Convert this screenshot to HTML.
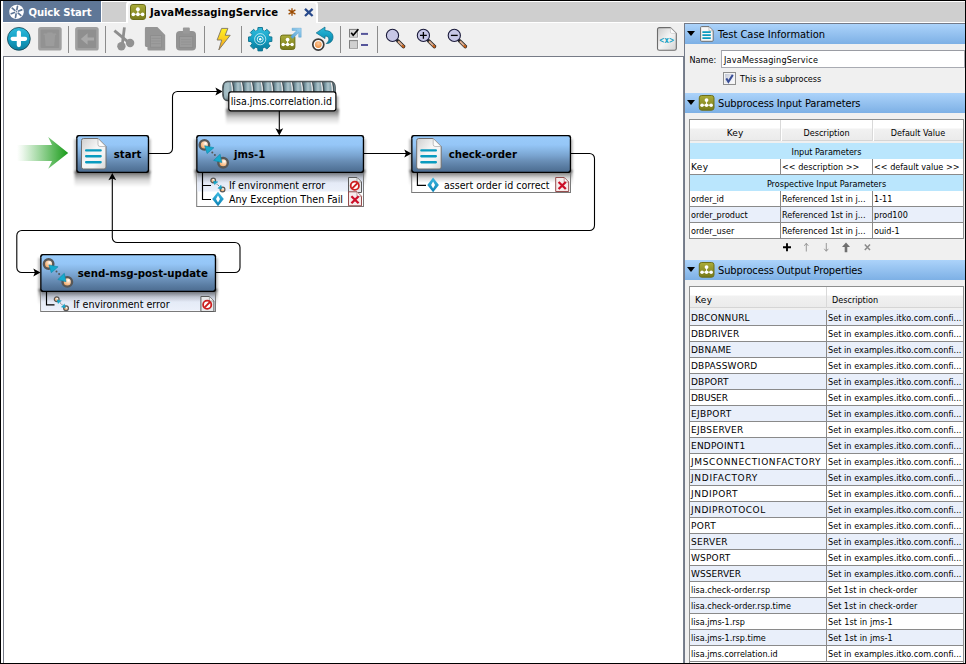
<!DOCTYPE html>
<html>
<head>
<meta charset="utf-8">
<title>JavaMessagingService</title>
<style>
html,body{margin:0;padding:0;}
body{width:966px;height:664px;overflow:hidden;background:#f0f0f0;position:relative;
  font-family:"DejaVu Sans Condensed","DejaVu Sans","Liberation Sans",sans-serif;font-stretch:condensed;font-size:9px;color:#000;}
.abs{position:absolute;}
#frame-top{left:0;top:0;width:966px;height:1px;background:#000;}
#frame-left{left:0;top:0;width:1px;height:664px;background:#000;}
#wl{left:1px;top:1px;width:2px;height:662px;background:#fff;}
#frame-right{left:965px;top:0;width:1px;height:664px;background:#000;}
#frame-bottom{left:0;top:663px;width:966px;height:1px;background:#000;}
#tabbar{left:3px;top:1px;width:962px;height:22px;background:#cfcfcf;border-top:1px solid #fff;border-bottom:1px solid #fff;box-sizing:border-box;}
#tab1{left:3px;top:1px;width:98px;height:21px;background:#5f7797;border-right:1px solid #fff;}
#tab2{left:126px;top:1px;width:192px;height:22px;background:#f0f0f0;border-radius:4px 4px 0 0;border:2px solid #fff;border-bottom:none;box-sizing:border-box;}
.tabtxt{font-weight:bold;font-size:11.2px;white-space:nowrap;}
#toolbar{left:3px;top:23px;width:681px;height:33px;background:#f0f0f0;}
.sep{width:1.2px;height:27px;top:26px;background:#8c8c8c;}
#canvas{left:3px;top:56px;width:681px;height:608px;background:#fff;border-top:1px solid #767b87;border-left:1px solid #767b87;border-right:1px solid #7a8290;box-sizing:border-box;}
#split{left:684px;top:23px;width:281px;height:641px;background:#737a88;}
#rpanel{left:685px;top:24px;width:280px;height:639px;background:#f0f0f0;}
.hdr{left:685px;width:280px;height:20px;background:linear-gradient(#acd3fa,#7db0e5);}
.hdr span{position:absolute;left:33px;top:4px;font-size:11px;white-space:nowrap;}
.t9{font-size:9px;white-space:nowrap;line-height:11px;}
.c{text-align:center;}
.u9{font-family:"DejaVu Sans","Liberation Sans",sans-serif;font-stretch:normal;letter-spacing:0.1px;}
.tri{position:absolute;left:2.1px;top:6.9px;width:0;height:0;border-left:4.45px solid transparent;border-right:4.45px solid transparent;border-top:5.7px solid #000;}
</style>
</head>
<body>
<div id="wl" class="abs"></div>
<div id="tabbar" class="abs"></div>
<div id="tab1" class="abs"><span class="abs tabtxt" style="left:25.5px;top:4.5px;letter-spacing:-0.1px;color:#fff;">Quick Start</span></div>
<div id="tab2" class="abs"><span class="abs tabtxt" style="left:22px;top:2.5px;letter-spacing:0.09px;">JavaMessagingService</span></div>
<div id="toolbar" class="abs"></div>
<div class="abs sep" style="left:68px"></div>
<div class="abs sep" style="left:105px"></div>
<div class="abs sep" style="left:204px"></div>
<div class="abs sep" style="left:241px"></div>
<div class="abs sep" style="left:340px"></div>
<div class="abs sep" style="left:377px"></div>
<div id="canvas" class="abs"></div>
<div id="split" class="abs"></div>
<div id="rpanel" class="abs"></div>
<div class="abs hdr" style="top:24px"><div class="tri"></div><span>Test Case Information</span></div>
<div class="abs hdr" style="top:93px"><div class="tri"></div><span style="letter-spacing:-0.11px">Subprocess Input Parameters</span></div>
<div class="abs hdr" style="top:260px"><div class="tri"></div><span style="letter-spacing:-0.11px">Subprocess Output Properties</span></div>
<!--RIGHT-->
<div class="abs t9" style="left:689.5px;top:55px;">Name:</div>
<div class="abs" style="left:721px;top:50px;width:244px;height:18px;box-sizing:border-box;background:#fff;border:1px solid #a9abb2;border-top-color:#9a9ca3;"></div>
<div class="abs t9" style="left:724px;top:55px;letter-spacing:0.2px;">JavaMessagingService</div>
<div class="abs" style="left:723px;top:72px;width:13px;height:13px;box-sizing:border-box;border:1px solid #8e8f8f;box-shadow:inset 0 0 0 1px #f4f4f4;background:linear-gradient(135deg,#c4c9d6 10%,#eceef4 60%,#fbfbfd 90%);"></div>
<svg class="abs" style="left:723px;top:72px" width="13" height="13" viewBox="0 0 13 13"><path d="M3.3 6.4 L5.4 9.8 L9.8 2.9" fill="none" stroke="#384d96" stroke-width="2"/></svg>
<div class="abs t9" style="left:740px;top:74px;">This is a subprocess</div>
<div class="abs" style="left:689px;top:119px;width:275px;height:120px;box-sizing:border-box;border:1px solid #8e8f8f;background:#fff;"></div>
<div class="abs" style="left:690px;top:120px;width:273px;height:21px;background:linear-gradient(#fff 0%,#fff 40%,#f1f1f1 45%,#ebebeb 100%);border-bottom:1px solid #d5d5d5;box-sizing:border-box;"></div>
<div class="abs" style="left:690px;top:141px;width:273px;height:2px;background:#f0f0f0;"></div>
<div class="abs" style="left:780px;top:120px;width:1px;height:21px;background:#d9d9d9;"></div>
<div class="abs" style="left:781px;top:120px;width:1px;height:21px;background:#fff;"></div>
<div class="abs" style="left:872px;top:120px;width:1px;height:21px;background:#d9d9d9;"></div>
<div class="abs" style="left:873px;top:120px;width:1px;height:21px;background:#fff;"></div>
<div class="abs t9 c u9" style="left:690px;top:128px;width:90px;">Key</div>
<div class="abs t9 c" style="left:781px;top:128px;width:91px;">Description</div>
<div class="abs t9 c" style="left:873px;top:128px;width:90px;">Default Value</div>
<div class="abs t9 c" style="left:690px;top:143px;width:273px;height:16px;background:#bae6fd;line-height:18px;">Input Parameters</div>
<div class="abs t9 c" style="left:690px;top:175px;width:273px;height:16px;background:#bae6fd;line-height:18px;">Prospective Input Parameters</div>
<div class="abs" style="left:690px;top:159px;width:273px;height:15px;background:#fff;"></div>
<div class="abs" style="left:690px;top:174px;width:273px;height:1px;background:#8a8a8a;"></div>
<div class="abs t9 u9" style="left:691px;top:162px;letter-spacing:0.35px;">Key</div>
<div class="abs t9" style="left:782px;top:162px;">&lt;&lt; description &gt;&gt;</div>
<div class="abs t9" style="left:874px;top:162px;">&lt;&lt; default value &gt;&gt;</div>
<div class="abs" style="left:690px;top:191px;width:273px;height:15px;background:#fff;"></div>
<div class="abs" style="left:690px;top:206px;width:273px;height:1px;background:#8a8a8a;"></div>
<div class="abs t9" style="left:691px;top:194px;">order_id</div>
<div class="abs t9" style="left:782px;top:194px;">Referenced 1st in j...</div>
<div class="abs t9" style="left:874px;top:194px;">1-11</div>
<div class="abs" style="left:690px;top:207px;width:273px;height:15px;background:#e9effa;"></div>
<div class="abs" style="left:690px;top:222px;width:273px;height:1px;background:#8a8a8a;"></div>
<div class="abs t9" style="left:691px;top:210px;">order_product</div>
<div class="abs t9" style="left:782px;top:210px;">Referenced 1st in j...</div>
<div class="abs t9" style="left:874px;top:210px;">prod100</div>
<div class="abs" style="left:690px;top:223px;width:273px;height:15px;background:#fff;"></div>
<div class="abs" style="left:690px;top:238px;width:273px;height:1px;background:#8a8a8a;"></div>
<div class="abs t9" style="left:691px;top:226px;">order_user</div>
<div class="abs t9" style="left:782px;top:226px;">Referenced 1st in j...</div>
<div class="abs t9" style="left:874px;top:226px;">ouid-1</div>
<div class="abs" style="left:780px;top:159px;width:1px;height:16px;background:#8a8a8a;"></div>
<div class="abs" style="left:780px;top:191px;width:1px;height:48px;background:#8a8a8a;"></div>
<div class="abs" style="left:872px;top:159px;width:1px;height:16px;background:#8a8a8a;"></div>
<div class="abs" style="left:872px;top:191px;width:1px;height:48px;background:#8a8a8a;"></div>
<svg class="abs" style="left:685px;top:24px" width="280" height="260" viewBox="685 24 280 260">
<defs><linearGradient id="ol2" x1="0" y1="0" x2="0" y2="1"><stop offset="0" stop-color="#aaac3a"/><stop offset="1" stop-color="#787a1a"/></linearGradient>
<g id="sub2"><rect x="0.5" y="0.5" width="15" height="15" rx="2.4" fill="url(#ol2)" stroke="#6b6d17" stroke-width="1"/><path d="M3.2 10.3 H12.6 M7.9 5.2 V10.3" stroke="#fff" stroke-width="0.9"/><circle cx="7.9" cy="5.2" r="1.95" fill="#fff"/><circle cx="3.3" cy="10.4" r="1.8" fill="#fff"/><circle cx="7.9" cy="10.4" r="1.8" fill="#fff"/><circle cx="12.6" cy="10.4" r="1.8" fill="#fff"/></g></defs>
<path d="M701.6 26.6 H709 L713.2 30.8 V40.3 a1 1 0 0 1 -1 1 H701.6 a1 1 0 0 1 -1 -1 V27.6 a1 1 0 0 1 1 -1 Z" fill="#f7f7f7" stroke="#6f6f6f" stroke-width="1"/>
<path d="M709 26.8 V30.8 H713 Z" fill="#fff" stroke="#8a8a8a" stroke-width="0.5"/>
<path d="M702.4 32.1 H710.8 M702.4 35.1 H710.8 M702.4 38.1 H710.8" stroke="#0a9bbf" stroke-width="1.8"/>
<use href="#sub2" transform="translate(698.8,95) scale(0.98)"/>
<use href="#sub2" transform="translate(698.8,262) scale(0.98)"/>
<path d="M787 243.3 V251.3 M783 247.3 H791" stroke="#000" stroke-width="1.9"/>
<path d="M806.3 251.5 V243.5 M804.3 245.8 L806.3 243.3 L808.3 245.8" stroke="#8e8e8e" stroke-width="0.9" fill="none"/>
<path d="M826.3 243 V251 M824.3 248.8 L826.3 251.3 L828.3 248.8" stroke="#8e8e8e" stroke-width="0.9" fill="none"/>
<path d="M846 242.4 L850 247 H847.3 V252.2 H844.7 V247 H842 Z" fill="#6f6f6f"/>
<path d="M864.8 244.6 L870 250 M870 244.6 L864.8 250" stroke="#8a8a8a" stroke-width="1.5"/>
</svg>
<div class="abs" style="left:689px;top:286px;width:275px;height:378px;box-sizing:border-box;border:1px solid #8e8f8f;background:#fff;"></div>
<div class="abs" style="left:690px;top:287px;width:273px;height:21px;background:linear-gradient(#fff 0%,#fff 40%,#f1f1f1 45%,#ebebeb 100%);border-bottom:1px solid #d5d5d5;box-sizing:border-box;"></div>
<div class="abs" style="left:690px;top:308px;width:273px;height:2px;background:#f0f0f0;"></div>
<div class="abs" style="left:826px;top:287px;width:1px;height:21px;background:#d9d9d9;"></div>
<div class="abs t9 u9" style="left:695px;top:295px;letter-spacing:0.35px;">Key</div>
<div class="abs t9" style="left:832px;top:295px;">Description</div>
<div class="abs" style="left:690px;top:310px;width:273px;height:15px;background:#e9effa;"></div>
<div class="abs" style="left:690px;top:325px;width:273px;height:1px;background:#8a8a8a;"></div>
<div class="abs t9 u9" style="left:691px;top:313px;letter-spacing:0.11px;">DBCONNURL</div>
<div class="abs t9" style="left:828px;top:313px;"><span style="letter-spacing:0.05px">Set in examples.itko.com.confi...</span></div>
<div class="abs" style="left:690px;top:326px;width:273px;height:15px;background:#fff;"></div>
<div class="abs" style="left:690px;top:341px;width:273px;height:1px;background:#8a8a8a;"></div>
<div class="abs t9 u9" style="left:691px;top:329px;letter-spacing:0.16px;">DBDRIVER</div>
<div class="abs t9" style="left:828px;top:329px;"><span style="letter-spacing:0.05px">Set in examples.itko.com.confi...</span></div>
<div class="abs" style="left:690px;top:342px;width:273px;height:15px;background:#e9effa;"></div>
<div class="abs" style="left:690px;top:357px;width:273px;height:1px;background:#8a8a8a;"></div>
<div class="abs t9 u9" style="left:691px;top:345px;letter-spacing:0.17px;">DBNAME</div>
<div class="abs t9" style="left:828px;top:345px;"><span style="letter-spacing:0.05px">Set in examples.itko.com.confi...</span></div>
<div class="abs" style="left:690px;top:358px;width:273px;height:15px;background:#fff;"></div>
<div class="abs" style="left:690px;top:373px;width:273px;height:1px;background:#8a8a8a;"></div>
<div class="abs t9 u9" style="left:691px;top:361px;letter-spacing:0.17px;">DBPASSWORD</div>
<div class="abs t9" style="left:828px;top:361px;"><span style="letter-spacing:0.05px">Set in examples.itko.com.confi...</span></div>
<div class="abs" style="left:690px;top:374px;width:273px;height:15px;background:#e9effa;"></div>
<div class="abs" style="left:690px;top:389px;width:273px;height:1px;background:#8a8a8a;"></div>
<div class="abs t9 u9" style="left:691px;top:377px;letter-spacing:0.18px;">DBPORT</div>
<div class="abs t9" style="left:828px;top:377px;"><span style="letter-spacing:0.05px">Set in examples.itko.com.confi...</span></div>
<div class="abs" style="left:690px;top:390px;width:273px;height:15px;background:#fff;"></div>
<div class="abs" style="left:690px;top:405px;width:273px;height:1px;background:#8a8a8a;"></div>
<div class="abs t9 u9" style="left:691px;top:393px;letter-spacing:-0.08px;">DBUSER</div>
<div class="abs t9" style="left:828px;top:393px;"><span style="letter-spacing:0.05px">Set in examples.itko.com.confi...</span></div>
<div class="abs" style="left:690px;top:406px;width:273px;height:15px;background:#e9effa;"></div>
<div class="abs" style="left:690px;top:421px;width:273px;height:1px;background:#8a8a8a;"></div>
<div class="abs t9 u9" style="left:691px;top:409px;letter-spacing:0.34px;">EJBPORT</div>
<div class="abs t9" style="left:828px;top:409px;"><span style="letter-spacing:0.05px">Set in examples.itko.com.confi...</span></div>
<div class="abs" style="left:690px;top:422px;width:273px;height:15px;background:#fff;"></div>
<div class="abs" style="left:690px;top:437px;width:273px;height:1px;background:#8a8a8a;"></div>
<div class="abs t9 u9" style="left:691px;top:425px;letter-spacing:0.33px;">EJBSERVER</div>
<div class="abs t9" style="left:828px;top:425px;"><span style="letter-spacing:0.05px">Set in examples.itko.com.confi...</span></div>
<div class="abs" style="left:690px;top:438px;width:273px;height:15px;background:#e9effa;"></div>
<div class="abs" style="left:690px;top:453px;width:273px;height:1px;background:#8a8a8a;"></div>
<div class="abs t9 u9" style="left:691px;top:441px;letter-spacing:0.21px;">ENDPOINT1</div>
<div class="abs t9" style="left:828px;top:441px;"><span style="letter-spacing:0.05px">Set in examples.itko.com.confi...</span></div>
<div class="abs" style="left:690px;top:454px;width:273px;height:15px;background:#fff;"></div>
<div class="abs" style="left:690px;top:469px;width:273px;height:1px;background:#8a8a8a;"></div>
<div class="abs t9 u9" style="left:691px;top:457px;letter-spacing:0.64px;">JMSCONNECTIONFACTORY</div>
<div class="abs t9" style="left:828px;top:457px;"><span style="letter-spacing:0.05px">Set in examples.itko.com.confi...</span></div>
<div class="abs" style="left:690px;top:470px;width:273px;height:15px;background:#e9effa;"></div>
<div class="abs" style="left:690px;top:485px;width:273px;height:1px;background:#8a8a8a;"></div>
<div class="abs t9 u9" style="left:691px;top:473px;letter-spacing:0.69px;">JNDIFACTORY</div>
<div class="abs t9" style="left:828px;top:473px;"><span style="letter-spacing:0.05px">Set in examples.itko.com.confi...</span></div>
<div class="abs" style="left:690px;top:486px;width:273px;height:15px;background:#fff;"></div>
<div class="abs" style="left:690px;top:501px;width:273px;height:1px;background:#8a8a8a;"></div>
<div class="abs t9 u9" style="left:691px;top:489px;letter-spacing:0.56px;">JNDIPORT</div>
<div class="abs t9" style="left:828px;top:489px;"><span style="letter-spacing:0.05px">Set in examples.itko.com.confi...</span></div>
<div class="abs" style="left:690px;top:502px;width:273px;height:15px;background:#e9effa;"></div>
<div class="abs" style="left:690px;top:517px;width:273px;height:1px;background:#8a8a8a;"></div>
<div class="abs t9 u9" style="left:691px;top:505px;letter-spacing:0.5px;">JNDIPROTOCOL</div>
<div class="abs t9" style="left:828px;top:505px;"><span style="letter-spacing:0.05px">Set in examples.itko.com.confi...</span></div>
<div class="abs" style="left:690px;top:518px;width:273px;height:15px;background:#fff;"></div>
<div class="abs" style="left:690px;top:533px;width:273px;height:1px;background:#8a8a8a;"></div>
<div class="abs t9 u9" style="left:691px;top:521px;letter-spacing:0.35px;">PORT</div>
<div class="abs t9" style="left:828px;top:521px;"><span style="letter-spacing:0.05px">Set in examples.itko.com.confi...</span></div>
<div class="abs" style="left:690px;top:534px;width:273px;height:15px;background:#e9effa;"></div>
<div class="abs" style="left:690px;top:549px;width:273px;height:1px;background:#8a8a8a;"></div>
<div class="abs t9 u9" style="left:691px;top:537px;letter-spacing:0.27px;">SERVER</div>
<div class="abs t9" style="left:828px;top:537px;"><span style="letter-spacing:0.05px">Set in examples.itko.com.confi...</span></div>
<div class="abs" style="left:690px;top:550px;width:273px;height:15px;background:#fff;"></div>
<div class="abs" style="left:690px;top:565px;width:273px;height:1px;background:#8a8a8a;"></div>
<div class="abs t9 u9" style="left:691px;top:553px;letter-spacing:0.19px;">WSPORT</div>
<div class="abs t9" style="left:828px;top:553px;"><span style="letter-spacing:0.05px">Set in examples.itko.com.confi...</span></div>
<div class="abs" style="left:690px;top:566px;width:273px;height:15px;background:#e9effa;"></div>
<div class="abs" style="left:690px;top:581px;width:273px;height:1px;background:#8a8a8a;"></div>
<div class="abs t9 u9" style="left:691px;top:569px;letter-spacing:0.03px;">WSSERVER</div>
<div class="abs t9" style="left:828px;top:569px;"><span style="letter-spacing:0.05px">Set in examples.itko.com.confi...</span></div>
<div class="abs" style="left:690px;top:582px;width:273px;height:15px;background:#fff;"></div>
<div class="abs" style="left:690px;top:597px;width:273px;height:1px;background:#8a8a8a;"></div>
<div class="abs t9" style="left:691px;top:585px;">lisa.check-order.rsp</div>
<div class="abs t9" style="left:828px;top:585px;">Set 1st in check-order</div>
<div class="abs" style="left:690px;top:598px;width:273px;height:15px;background:#e9effa;"></div>
<div class="abs" style="left:690px;top:613px;width:273px;height:1px;background:#8a8a8a;"></div>
<div class="abs t9" style="left:691px;top:601px;">lisa.check-order.rsp.time</div>
<div class="abs t9" style="left:828px;top:601px;">Set 1st in check-order</div>
<div class="abs" style="left:690px;top:614px;width:273px;height:15px;background:#fff;"></div>
<div class="abs" style="left:690px;top:629px;width:273px;height:1px;background:#8a8a8a;"></div>
<div class="abs t9" style="left:691px;top:617px;">lisa.jms-1.rsp</div>
<div class="abs t9" style="left:828px;top:617px;"><span style="letter-spacing:0.09px">Set 1st in jms-1</span></div>
<div class="abs" style="left:690px;top:630px;width:273px;height:15px;background:#e9effa;"></div>
<div class="abs" style="left:690px;top:645px;width:273px;height:1px;background:#8a8a8a;"></div>
<div class="abs t9" style="left:691px;top:633px;">lisa.jms-1.rsp.time</div>
<div class="abs t9" style="left:828px;top:633px;"><span style="letter-spacing:0.09px">Set 1st in jms-1</span></div>
<div class="abs" style="left:690px;top:646px;width:273px;height:15px;background:#fff;"></div>
<div class="abs" style="left:690px;top:661px;width:273px;height:1px;background:#8a8a8a;"></div>
<div class="abs t9" style="left:691px;top:649px;">lisa.jms.correlation.id</div>
<div class="abs t9" style="left:828px;top:649px;"><span style="letter-spacing:0.05px">Set in examples.itko.com.confi...</span></div>
<div class="abs" style="left:826px;top:310px;width:1px;height:352px;background:#8a8a8a;"></div>
<!--/RIGHT-->
<!--DIAGRAM-->
<svg class="abs" style="left:0;top:0" width="966" height="664" viewBox="0 0 966 664">
<defs>
<linearGradient id="ng" x1="0" y1="0" x2="0" y2="1"><stop offset="0" stop-color="#99cbfa"/><stop offset="0.24" stop-color="#95c6f7"/><stop offset="0.4" stop-color="#87b5e3"/><stop offset="0.55" stop-color="#79a3cf"/><stop offset="0.7" stop-color="#698eb6"/><stop offset="0.85" stop-color="#5a7da3"/><stop offset="1" stop-color="#4d6d91"/></linearGradient>
<linearGradient id="sg" x1="0" y1="0" x2="0" y2="1"><stop offset="0" stop-color="#8c94a4"/><stop offset="0.12" stop-color="#a9b1c1"/><stop offset="0.3" stop-color="#d9e1f0"/><stop offset="0.55" stop-color="#eef2fa"/><stop offset="1" stop-color="#ffffff"/></linearGradient>
<linearGradient id="sg2" x1="0" y1="0" x2="0" y2="1"><stop offset="0" stop-color="#8c94a4"/><stop offset="0.07" stop-color="#a9b1c1"/><stop offset="0.18" stop-color="#d9e1f0"/><stop offset="0.45" stop-color="#e8edf8"/><stop offset="0.5" stop-color="#ffffff"/><stop offset="1" stop-color="#ffffff"/></linearGradient>
<linearGradient id="rowb" x1="0" y1="0" x2="0" y2="1"><stop offset="0" stop-color="#dce4f3"/><stop offset="1" stop-color="#ebf0fa"/></linearGradient>
<linearGradient id="subsh" x1="0" y1="0" x2="0" y2="1"><stop offset="0" stop-color="#000" stop-opacity="0.55"/><stop offset="0.25" stop-color="#000" stop-opacity="0.36"/><stop offset="0.55" stop-color="#000" stop-opacity="0.15"/><stop offset="1" stop-color="#000" stop-opacity="0"/></linearGradient>
<linearGradient id="ga" x1="0" y1="0" x2="1" y2="0"><stop offset="0" stop-color="#22a422" stop-opacity="0"/><stop offset="0.1" stop-color="#22a422" stop-opacity="0.08"/><stop offset="1" stop-color="#179a17" stop-opacity="1"/></linearGradient>
<linearGradient id="shd" x1="0" y1="0" x2="0" y2="1"><stop offset="0" stop-color="#000" stop-opacity="0.55"/><stop offset="0.15" stop-color="#000" stop-opacity="0.5"/><stop offset="0.55" stop-color="#000" stop-opacity="0.16"/><stop offset="1" stop-color="#000" stop-opacity="0"/></linearGradient>
<linearGradient id="docg" x1="0" y1="0" x2="1" y2="1"><stop offset="0" stop-color="#cfcfcf"/><stop offset="0.45" stop-color="#f6f6f6"/><stop offset="0.7" stop-color="#f4f4f4"/><stop offset="1" stop-color="#d4d4d4"/></linearGradient>
<radialGradient id="og" cx="0.62" cy="0.35" r="0.7"><stop offset="0" stop-color="#fff"/><stop offset="0.35" stop-color="#fbd3ae"/><stop offset="1" stop-color="#f29a4a"/></radialGradient>
<linearGradient id="dg" x1="0" y1="0" x2="0" y2="1"><stop offset="0" stop-color="#3dbbe3"/><stop offset="1" stop-color="#0b7fb2"/></linearGradient>
<linearGradient id="coil" x1="0" y1="0" x2="1" y2="0"><stop offset="0" stop-color="#5b747e"/><stop offset="0.15" stop-color="#7797a2"/><stop offset="0.42" stop-color="#aec5cc"/><stop offset="0.65" stop-color="#8aa7b0"/><stop offset="0.85" stop-color="#93adb5"/><stop offset="1" stop-color="#718f99"/></linearGradient>
<linearGradient id="coilv" x1="0" y1="0" x2="0" y2="1"><stop offset="0" stop-color="#333" stop-opacity="0.55"/><stop offset="0.12" stop-color="#333" stop-opacity="0"/><stop offset="0.85" stop-color="#333" stop-opacity="0"/><stop offset="1" stop-color="#333" stop-opacity="0.5"/></linearGradient>
<filter id="bl2" x="-10%" y="-30%" width="120%" height="160%"><feGaussianBlur stdDeviation="1.3 0.8"/></filter>
<filter id="bl" x="-30%" y="-60%" width="160%" height="220%"><feGaussianBlur stdDeviation="3"/></filter>
<g id="jms"><circle cx="8.4" cy="8.9" r="4.75" fill="url(#og)" stroke="#575757" stroke-width="2.4"/><circle cx="27.1" cy="26.8" r="4.75" fill="url(#og)" stroke="#575757" stroke-width="2.4"/>
<circle cx="16.3" cy="16.5" r="1" fill="#555"/><circle cx="18.9" cy="19" r="1" fill="#555"/>
<path d="M8.7 9.8 L17.9 11.7 L11.1 17.6 Z" fill="#16a9cd" stroke="#0e86a6" stroke-width="0.6"/><path d="M24.1 18.2 L17.6 24.4 L25.8 26.6 Z" fill="#16a9cd" stroke="#0e86a6" stroke-width="0.6"/></g>
<g id="doc"><path d="M2.5 0.5 H17 L25 8.5 V29 a2 2 0 0 1 -2 2 H2.5 a2 2 0 0 1 -2 -2 V2.5 a2 2 0 0 1 2 -2 Z" fill="url(#docg)" stroke="#6f6f6f" stroke-width="1"/>
<path d="M17 0.5 L25 8.5 H19 a2 2 0 0 1 -2 -2 Z" fill="#fbfbfb" stroke="#9a9a9a" stroke-width="0.6"/>
<rect x="4" y="11.2" width="16.8" height="2.4" rx="1.1" fill="#0a9bbf"/><rect x="4" y="17" width="16.8" height="2.4" rx="1.1" fill="#0a9bbf"/><rect x="4" y="23" width="16.8" height="2.4" rx="1.1" fill="#0a9bbf"/></g>
<g id="dia"><path d="M0 -7.3 L5.8 0 L0 7.3 L-5.8 0 Z" fill="url(#dg)"/><path d="M0 -3.5 L2 0 L0 3.5 L-2 0 Z" fill="#fff"/></g>
<g id="noent"><path d="M0.5 0.5 H9 L13.5 5 V15.5 H0.5 Z" fill="#e6e8ea" stroke="#5a5a5a" stroke-width="1"/><path d="M9 0.5 V5 H13.5 Z" fill="#f6f6f6" stroke="#777" stroke-width="0.6"/>
<circle cx="6.8" cy="8.8" r="4.1" fill="#fff" stroke="#cc1f1f" stroke-width="1.8"/><path d="M4 11.6 L9.6 6" stroke="#cc1f1f" stroke-width="1.8"/></g>
<g id="xdoc"><path d="M0.5 0.5 H9 L13.5 5 V14.5 H0.5 Z" fill="#f6ecec" stroke="#8a3a3a" stroke-width="0.9"/><path d="M9 0.5 V5 H13.5 Z" fill="#fff" stroke="#a06060" stroke-width="0.6"/>
<path d="M3.4 5 L10.6 12 M10.6 5 L3.4 12" stroke="#cc0f28" stroke-width="2.3"/></g>
<path id="ah" d="M0 0 L-7.2 -3.9 L-5.6 0 L-7.2 3.9 Z" fill="#000"/>
</defs>
<path d="M17 145 H52 L48.2 137 L68.2 152.9 L48.2 168.7 L52 161 H17 Z" fill="url(#ga)"/>
<path d="M149 153.5 H167.5 a5 5 0 0 0 5 -5 V96.5 a5 5 0 0 1 5 -5 H218" fill="none" stroke="#000" stroke-width="1.1"/>
<use href="#ah" transform="translate(222.6,91.5)"/>
<path d="M279.3 111 V130" fill="none" stroke="#000" stroke-width="1.1"/>
<use href="#ah" transform="translate(279.3,135.5) rotate(90)"/>
<path d="M364 153.5 H406" fill="none" stroke="#000" stroke-width="1.1"/>
<use href="#ah" transform="translate(411.5,153.5)"/>
<path d="M571 153.5 H589.5 a5 5 0 0 1 5 5 V225.5 a5 5 0 0 1 -5 5 H21.8 a5 5 0 0 0 -5 5 V267.5 a5 5 0 0 0 5 5 H35" fill="none" stroke="#000" stroke-width="1.1"/>
<use href="#ah" transform="translate(40.5,272.5)"/>
<path d="M215 272.5 H235 a5 5 0 0 0 5 -5 V247.5 a5 5 0 0 0 -5 -5 H117.3 a5 5 0 0 1 -5 -5 V178" fill="none" stroke="#000" stroke-width="1.1"/>
<use href="#ah" transform="translate(112.3,173) rotate(-90)"/>
<clipPath id="cc"><rect x="222.7" y="81.4" width="112.6" height="19.2" rx="4.5" ry="6"/></clipPath>
<g clip-path="url(#cc)">
<rect x="222" y="81" width="114" height="20" fill="#7896a0"/>
<rect x="213.80" y="81" width="10" height="20" fill="url(#coil)"/>
<rect x="223.80" y="81" width="10" height="20" fill="url(#coil)"/>
<rect x="233.80" y="81" width="10" height="20" fill="url(#coil)"/>
<rect x="243.80" y="81" width="10" height="20" fill="url(#coil)"/>
<rect x="253.80" y="81" width="10" height="20" fill="url(#coil)"/>
<rect x="263.80" y="81" width="10" height="20" fill="url(#coil)"/>
<rect x="273.80" y="81" width="10" height="20" fill="url(#coil)"/>
<rect x="283.80" y="81" width="10" height="20" fill="url(#coil)"/>
<rect x="293.80" y="81" width="10" height="20" fill="url(#coil)"/>
<rect x="303.80" y="81" width="10" height="20" fill="url(#coil)"/>
<rect x="313.80" y="81" width="10" height="20" fill="url(#coil)"/>
<rect x="323.80" y="81" width="10" height="20" fill="url(#coil)"/>
<path d="M221.20 82 Q223.60 91 221.20 100" fill="none" stroke="#f0eaea" stroke-width="1.1" opacity="1"/>
<path d="M222.60 82 Q225.00 91 222.60 100" fill="none" stroke="#39464b" stroke-width="1.1" opacity="0.9"/>
<path d="M231.20 82 Q233.60 91 231.20 100" fill="none" stroke="#f0eaea" stroke-width="1.1" opacity="1"/>
<path d="M232.60 82 Q235.00 91 232.60 100" fill="none" stroke="#39464b" stroke-width="1.1" opacity="0.9"/>
<path d="M241.20 82 Q243.60 91 241.20 100" fill="none" stroke="#f0eaea" stroke-width="1.1" opacity="1"/>
<path d="M242.60 82 Q245.00 91 242.60 100" fill="none" stroke="#39464b" stroke-width="1.1" opacity="0.9"/>
<path d="M251.20 82 Q253.60 91 251.20 100" fill="none" stroke="#f0eaea" stroke-width="1.1" opacity="1"/>
<path d="M252.60 82 Q255.00 91 252.60 100" fill="none" stroke="#39464b" stroke-width="1.1" opacity="0.9"/>
<path d="M261.20 82 Q263.60 91 261.20 100" fill="none" stroke="#f0eaea" stroke-width="1.1" opacity="1"/>
<path d="M262.60 82 Q265.00 91 262.60 100" fill="none" stroke="#39464b" stroke-width="1.1" opacity="0.9"/>
<path d="M271.20 82 Q273.60 91 271.20 100" fill="none" stroke="#f0eaea" stroke-width="1.1" opacity="1"/>
<path d="M272.60 82 Q275.00 91 272.60 100" fill="none" stroke="#39464b" stroke-width="1.1" opacity="0.9"/>
<path d="M281.20 82 Q283.60 91 281.20 100" fill="none" stroke="#f0eaea" stroke-width="1.1" opacity="1"/>
<path d="M282.60 82 Q285.00 91 282.60 100" fill="none" stroke="#39464b" stroke-width="1.1" opacity="0.9"/>
<path d="M291.20 82 Q293.60 91 291.20 100" fill="none" stroke="#f0eaea" stroke-width="1.1" opacity="1"/>
<path d="M292.60 82 Q295.00 91 292.60 100" fill="none" stroke="#39464b" stroke-width="1.1" opacity="0.9"/>
<path d="M301.20 82 Q303.60 91 301.20 100" fill="none" stroke="#f0eaea" stroke-width="1.1" opacity="1"/>
<path d="M302.60 82 Q305.00 91 302.60 100" fill="none" stroke="#39464b" stroke-width="1.1" opacity="0.9"/>
<path d="M311.20 82 Q313.60 91 311.20 100" fill="none" stroke="#f0eaea" stroke-width="1.1" opacity="1"/>
<path d="M312.60 82 Q315.00 91 312.60 100" fill="none" stroke="#39464b" stroke-width="1.1" opacity="0.9"/>
<path d="M321.20 82 Q323.60 91 321.20 100" fill="none" stroke="#f0eaea" stroke-width="1.1" opacity="1"/>
<path d="M322.60 82 Q325.00 91 322.60 100" fill="none" stroke="#39464b" stroke-width="1.1" opacity="0.9"/>
<path d="M331.20 82 Q333.60 91 331.20 100" fill="none" stroke="#f0eaea" stroke-width="1.1" opacity="1"/>
<path d="M332.60 82 Q335.00 91 332.60 100" fill="none" stroke="#39464b" stroke-width="1.1" opacity="0.9"/>
<ellipse cx="226.2" cy="91" rx="2.6" ry="8.2" fill="#a9c2c9" opacity="0.85"/>
<rect x="222" y="81" width="114" height="20" fill="url(#coilv)"/>
</g>
<rect x="222.7" y="81.4" width="112.6" height="19.2" rx="4.5" ry="6" fill="none" stroke="#50585b" stroke-width="1.1"/>
<rect x="226.5" y="96" width="112" height="14" fill="#000" opacity="0.28" filter="url(#bl2)"/><rect x="226" y="109" width="113" height="16" fill="url(#shd)" filter="url(#bl2)"/>
<rect x="228.8" y="91.8" width="107.1" height="19" rx="2.2" fill="#fff" stroke="#000" stroke-width="1.2"/>
<rect x="74.2" y="139" width="76.6" height="34" fill="#000" opacity="0.25" filter="url(#bl2)"/>
<rect x="74.6" y="171" width="75.8" height="16" fill="url(#shd)" filter="url(#bl2)"/>
<rect x="76.2" y="135" width="72.9" height="38" rx="2.3" fill="#000"/>
<rect x="77.5" y="136.35" width="70.3" height="35.3" rx="1.8" fill="url(#ng)"/>
<rect x="194.2" y="139" width="171.6" height="33" fill="#000" opacity="0.25" filter="url(#bl2)"/>
<rect x="194.6" y="170" width="170.8" height="16" fill="url(#shd)" filter="url(#bl2)"/>
<rect x="196.7" y="171" width="166.8" height="35.5" fill="#fff" stroke="#7a7a7a" stroke-width="1"/>
<rect x="197.2" y="172" width="165.8" height="19.5" fill="url(#rowb)"/>
<rect x="197.2" y="172" width="165.8" height="11" fill="url(#subsh)"/>
<rect x="196.2" y="135" width="167.9" height="38" rx="2.3" fill="#000"/>
<rect x="197.5" y="136.35" width="165.3" height="35.3" rx="1.8" fill="url(#ng)"/>
<rect x="409.2" y="139" width="163.6" height="33" fill="#000" opacity="0.25" filter="url(#bl2)"/>
<rect x="409.6" y="170" width="162.8" height="16" fill="url(#shd)" filter="url(#bl2)"/>
<rect x="411.7" y="171" width="158.8" height="21.5" fill="#fff" stroke="#7a7a7a" stroke-width="1"/>
<rect x="412.2" y="172" width="157.8" height="11" fill="url(#subsh)"/>
<rect x="411.2" y="135" width="159.9" height="38" rx="2.3" fill="#000"/>
<rect x="412.5" y="136.35" width="157.3" height="35.3" rx="1.8" fill="url(#ng)"/>
<rect x="38.2" y="258" width="179.6" height="33" fill="#000" opacity="0.25" filter="url(#bl2)"/>
<rect x="38.6" y="289" width="178.8" height="16" fill="url(#shd)" filter="url(#bl2)"/>
<rect x="40.7" y="290" width="174.8" height="21.5" fill="#fff" stroke="#7a7a7a" stroke-width="1"/>
<rect x="41.2" y="291" width="173.8" height="19.5" fill="url(#rowb)"/>
<rect x="41.2" y="291" width="173.8" height="11" fill="url(#subsh)"/>
<rect x="40.2" y="254" width="175.9" height="38" rx="2.3" fill="#000"/>
<rect x="41.5" y="255.35" width="173.3" height="35.3" rx="1.8" fill="url(#ng)"/>
<use href="#doc" transform="translate(81,138)"/>
<use href="#doc" transform="translate(416.2,138)"/>
<use href="#jms" transform="translate(196,136)"/>
<use href="#jms" transform="translate(40.2,255.1)"/>
<path d="M202.5 172 V199.5 H211 M202.5 185.5 H211" fill="none" stroke="#000" stroke-width="1.15"/>
<use href="#jms" transform="translate(209,176) scale(0.5)"/>
<use href="#dia" transform="translate(218,199)"/>
<use href="#noent" transform="translate(348,177)"/>
<use href="#xdoc" transform="translate(348,191.3)"/>
<path d="M417.4 172 V185.3 H426" fill="none" stroke="#000" stroke-width="1.15"/>
<use href="#dia" transform="translate(433.1,184.9)"/>
<use href="#xdoc" transform="translate(555.2,177)"/>
<path d="M46.5 291 V304.8 H54.5" fill="none" stroke="#000" stroke-width="1.15"/>
<use href="#jms" transform="translate(52.5,294.8) scale(0.5)"/>
<use href="#noent" transform="translate(200.4,296)"/>
<text x="113.8" y="157.6" font-size="11" font-family="'DejaVu Sans Condensed','DejaVu Sans','Liberation Sans',sans-serif" font-stretch="condensed" font-weight="bold" textLength="27.5" lengthAdjust="spacingAndGlyphs">start</text>
<text x="234" y="157.6" font-size="11" font-family="'DejaVu Sans Condensed','DejaVu Sans','Liberation Sans',sans-serif" font-stretch="condensed" font-weight="bold" textLength="31.2" lengthAdjust="spacingAndGlyphs">jms-1</text>
<text x="448.7" y="157.6" font-size="11" font-family="'DejaVu Sans Condensed','DejaVu Sans','Liberation Sans',sans-serif" font-stretch="condensed" font-weight="bold" textLength="68.3" lengthAdjust="spacingAndGlyphs">check-order</text>
<text x="77.7" y="277" font-size="11" font-family="'DejaVu Sans Condensed','DejaVu Sans','Liberation Sans',sans-serif" font-stretch="condensed" font-weight="bold" textLength="130.2" lengthAdjust="spacingAndGlyphs">send-msg-post-update</text>
<text x="230.7" y="104.8" font-size="11" font-family="'DejaVu Sans Condensed','DejaVu Sans','Liberation Sans',sans-serif" font-stretch="condensed" textLength="101.3" lengthAdjust="spacingAndGlyphs">lisa.jms.correlation.id</text>
<text x="228.9" y="188.8" font-size="11" font-family="'DejaVu Sans Condensed','DejaVu Sans','Liberation Sans',sans-serif" font-stretch="condensed" textLength="96.3" lengthAdjust="spacingAndGlyphs">If environment error</text>
<text x="228.9" y="202.6" font-size="11" font-family="'DejaVu Sans Condensed','DejaVu Sans','Liberation Sans',sans-serif" font-stretch="condensed" textLength="114.1" lengthAdjust="spacingAndGlyphs">Any Exception Then Fail</text>
<text x="444" y="188.7" font-size="11" font-family="'DejaVu Sans Condensed','DejaVu Sans','Liberation Sans',sans-serif" font-stretch="condensed" textLength="105.5" lengthAdjust="spacingAndGlyphs">assert order id correct</text>
<text x="73.3" y="307.5" font-size="11" font-family="'DejaVu Sans Condensed','DejaVu Sans','Liberation Sans',sans-serif" font-stretch="condensed" textLength="96.3" lengthAdjust="spacingAndGlyphs">If environment error</text>
</svg>
<!--/DIAGRAM-->
<!--ICONS-->
<svg class="abs" style="left:0;top:0" width="966" height="57" viewBox="0 0 966 57">
<defs>
<linearGradient id="tp" x1="0" y1="0" x2="0" y2="1"><stop offset="0" stop-color="#2fbadb"/><stop offset="0.5" stop-color="#14a0c4"/><stop offset="1" stop-color="#0b7f9f"/></linearGradient>
<linearGradient id="ol" x1="0" y1="0" x2="0" y2="1"><stop offset="0" stop-color="#aaac3a"/><stop offset="1" stop-color="#787a1a"/></linearGradient>
<linearGradient id="lt" x1="0" y1="0" x2="0" y2="1"><stop offset="0" stop-color="#fff226"/><stop offset="0.45" stop-color="#fbd020"/><stop offset="1" stop-color="#f29a1e"/></linearGradient>
<linearGradient id="ba" x1="0" y1="1" x2="1" y2="0"><stop offset="0" stop-color="#4b9ccf"/><stop offset="1" stop-color="#a4d6f4"/></linearGradient>
<radialGradient id="or2" cx="0.5" cy="0.35" r="0.7"><stop offset="0" stop-color="#fbc89a"/><stop offset="1" stop-color="#ee8a38"/></radialGradient>
<linearGradient id="xd" x1="0" y1="0" x2="1" y2="1"><stop offset="0" stop-color="#c9c9c9"/><stop offset="0.5" stop-color="#f5f5f5"/><stop offset="1" stop-color="#d2d2d2"/></linearGradient>
<g id="mag"><path d="M5.2 5.4 L11 11.2" stroke="#222" stroke-width="3.6" stroke-linecap="round"/><path d="M5.6 5.8 L10.6 10.8" stroke="#dcae90" stroke-width="2" stroke-linecap="butt"/><path d="M10.2 10.4 L11 11.2" stroke="#c8641e" stroke-width="2.2" stroke-linecap="round"/>
<circle cx="0" cy="0" r="6.1" fill="#c7c7e6" stroke="#1a1a3a" stroke-width="1.1"/></g>
<g id="sub"><rect x="0.5" y="0.5" width="15" height="15" rx="2.4" fill="url(#ol)" stroke="#6b6d17" stroke-width="1"/>
<path d="M3.2 10.3 H12.6 M7.9 5.2 V10.3" stroke="#fff" stroke-width="0.9"/><circle cx="7.9" cy="5.2" r="1.95" fill="#fff"/><circle cx="3.3" cy="10.4" r="1.8" fill="#fff"/><circle cx="7.9" cy="10.4" r="1.8" fill="#fff"/><circle cx="12.6" cy="10.4" r="1.8" fill="#fff"/></g>
</defs>
<ellipse cx="16.5" cy="11.8" rx="7.4" ry="7.1" fill="#fff" transform="rotate(-20 16.5 11.8)"/>
<path d="M16.88 9.63 L17.47 6.29" stroke="#5f7797" stroke-width="1.7" stroke-linecap="round"/>
<path d="M18.57 11.05 L21.76 9.88" stroke="#5f7797" stroke-width="1.7" stroke-linecap="round"/>
<path d="M18.19 13.21 L20.79 15.40" stroke="#5f7797" stroke-width="1.7" stroke-linecap="round"/>
<path d="M16.12 13.97 L15.53 17.31" stroke="#5f7797" stroke-width="1.7" stroke-linecap="round"/>
<path d="M14.43 12.55 L11.24 13.72" stroke="#5f7797" stroke-width="1.7" stroke-linecap="round"/>
<path d="M14.81 10.39 L12.21 8.20" stroke="#5f7797" stroke-width="1.7" stroke-linecap="round"/>
<circle cx="16.5" cy="11.8" r="0.8" fill="#5f7797"/>
<use href="#sub" transform="translate(130,4)"/>
<path d="M292 8.2 V15.8 M288.6 9.9 L295.4 14.1 M295.4 9.9 L288.6 14.1" stroke="#9a4a00" stroke-width="1.3" fill="none"/>
<path d="M305 8.8 L312.6 16 M312.6 8.8 L305 16" stroke="#27498b" stroke-width="2.3" fill="none"/>
<circle cx="18.85" cy="38.85" r="11.4" fill="url(#tp)" stroke="#17414f" stroke-width="0.8"/>
<path d="M12.6 38.85 H25.1 M18.85 32.6 V45.1" stroke="#fff" stroke-width="4.2" stroke-linecap="round"/>
<rect x="38.1" y="27.1" width="23.6" height="23.5" rx="2.6" fill="#a0a0a0"/><rect x="40.6" y="29.6" width="18.6" height="18.5" rx="1" fill="#929292"/>
<path d="M44.6 34 H55.2 L54.2 46 H45.6 Z M47.2 32.4 H52.6 V34 H47.2 Z" fill="#9c9c9c"/><path d="M43.6 34.2 H56.2" stroke="#9c9c9c" stroke-width="1.4"/>
<rect x="75.1" y="27.1" width="23.6" height="23.5" rx="2.6" fill="#a0a0a0"/><rect x="77.6" y="29.6" width="18.6" height="18.5" rx="1" fill="#8f8f8f"/>
<path d="M80.8 39 L87.6 33.2 V37.6 H94 V40.4 H87.6 V44.8 Z" fill="#a9a9a9"/>
<g fill="none" stroke="#8e8e8e"><path d="M114.4 30.6 L127.4 41.4" stroke-width="2.8"/><path d="M124.4 27.4 L122.4 43.4" stroke-width="2.8"/></g>
<circle cx="121.4" cy="46.3" r="4.2" fill="#929292"/><circle cx="130.1" cy="43" r="4.2" fill="#929292"/>
<path d="M146 27.1 H157.4 L165.2 35 V49.4 a1.2 1.2 0 0 1 -1.2 1.2 H149 a1.6 1.6 0 0 1 -1.6 -1.6 V47 H146.3 a1.4 1.4 0 0 1 -1.4 -1.4 V28.4 a1.3 1.3 0 0 1 1.3 -1.3 Z" fill="#959595"/>
<rect x="150.6" y="35.6" width="11" height="11.6" fill="#9d9d9d" stroke="#8c8c8c" stroke-width="0.8"/><path d="M151.4 38.4 H160.8 M151.4 41 H160.8 M151.4 43.6 H160.8" stroke="#8f8f8f" stroke-width="0.7"/>
<rect x="176" y="31" width="20" height="19.6" rx="4" fill="#939393"/><rect x="182.9" y="27.4" width="6.9" height="6" rx="1" fill="#999"/>
<rect x="179.4" y="36.4" width="13.4" height="11.2" fill="#9c9c9c" stroke="#8b8b8b" stroke-width="0.8"/><path d="M181 39.6 H191.2 M181 42 H191.2 M181 44.4 H191.2" stroke="#8f8f8f" stroke-width="0.6"/>
<path d="M221.6 28.4 H227.9 L225.2 35.3 H230.2 L218.8 49.9 L221.7 40 H217.1 Z" fill="url(#lt)" stroke="#7d7462" stroke-width="0.9" stroke-linejoin="round"/>
<path d="M257.75 30.33 L257.95 27.51 L262.45 27.51 L262.65 30.33 L264.73 31.20 L266.87 29.35 L270.05 32.53 L268.20 34.67 L269.07 36.75 L271.89 36.95 L271.89 41.45 L269.07 41.65 L268.20 43.73 L270.05 45.87 L266.87 49.05 L264.73 47.20 L262.65 48.07 L262.45 50.89 L257.95 50.89 L257.75 48.07 L255.67 47.20 L253.53 49.05 L250.35 45.87 L252.20 43.73 L251.33 41.65 L248.51 41.45 L248.51 36.95 L251.33 36.75 L252.20 34.67 L250.35 32.53 L253.53 29.35 L255.67 31.20 Z" fill="url(#tp)" stroke="#0d6f8c" stroke-width="0.9" stroke-linejoin="round"/>
<circle cx="260.2" cy="39.2" r="9.3" fill="url(#tp)"/>
<circle cx="260.2" cy="39.2" r="5.6" fill="none" stroke="#d8f2fa" stroke-width="0.8"/><circle cx="260.2" cy="39.2" r="3" fill="none" stroke="#d8f2fa" stroke-width="1"/><circle cx="260.2" cy="39.2" r="1.2" fill="#fff"/>
<use href="#sub" transform="translate(280,34.6) scale(0.96)"/>
<path d="M292.1 28.2 H301.2 V37.2 H298.7 V32.5 L292.7 38.7 L290.6 36.6 L296.8 30.5 H292.1 Z" fill="url(#ba)" stroke="#4a97c8" stroke-width="0.4"/>
<path d="M316.2 32.9 L325 27 V30.6 C331.5 30.3 334.6 35.6 332.3 40.2 C331.2 42.4 329 43.6 326.2 43.6 C328.6 41.6 329.3 39.6 328.6 37.9 C327.9 36.4 326.6 36 325 36.2 V38.6 Z" fill="url(#tp)" stroke="#0c6a86" stroke-width="0.7" stroke-linejoin="round"/>
<circle cx="318.3" cy="44.6" r="5.5" fill="#fff" stroke="#3b3b3b" stroke-width="1.7"/><circle cx="318.3" cy="44.6" r="3.4" fill="url(#or2)"/>
<rect x="349.5" y="29.4" width="8.2" height="8" fill="#d6d6d6" stroke="#7f7f7f" stroke-width="1"/><path d="M349 38 H358.4 V29" fill="none" stroke="#fff" stroke-width="0.9"/>
<path d="M351.2 32.8 L353.2 35.2 L358.4 29.2" fill="none" stroke="#000" stroke-width="1.7"/>
<rect x="349.5" y="40.6" width="8.2" height="8" fill="#d0d0d0" stroke="#7f7f7f" stroke-width="1"/><path d="M349 49.2 H358.4 V40.2" fill="none" stroke="#fff" stroke-width="0.9"/>
<rect x="361" y="32.9" width="7" height="2" fill="#55559a"/><rect x="361" y="44" width="7" height="2" fill="#55559a"/>
<use href="#mag" transform="translate(392.5,35.4)"/>
<use href="#mag" transform="translate(423.4,35.4)"/><path d="M420 35.4 H426.8 M423.4 32 V38.8" stroke="#000" stroke-width="1.3"/>
<use href="#mag" transform="translate(454.3,35.4)"/><path d="M450.9 35.4 H457.7" stroke="#000" stroke-width="1.3"/>
<path d="M659.4 27.6 H670.4 L676.3 33.5 V48.4 a1.9 1.9 0 0 1 -1.9 1.9 H659.4 a1.9 1.9 0 0 1 -1.9 -1.9 V29.5 a1.9 1.9 0 0 1 1.9 -1.9 Z" fill="url(#xd)" stroke="#6c6c6c" stroke-width="1.1"/>
<path d="M670.4 27.8 V32 a1.4 1.4 0 0 0 1.4 1.4 H676.2 Z" fill="#fdfdfd" stroke="#b5b5b5" stroke-width="0.5"/>
<text x="659" y="42.6" font-family="'DejaVu Sans','Liberation Sans',sans-serif" font-weight="bold" font-size="8.6" fill="#129fc3" textLength="15.4" lengthAdjust="spacingAndGlyphs">&lt;x&gt;</text>
</svg>
<!--/ICONS-->
<div id="frame-top" class="abs"></div>
<div id="frame-left" class="abs"></div>
<div id="frame-right" class="abs"></div>
<div id="frame-bottom" class="abs"></div>
</body>
</html>
